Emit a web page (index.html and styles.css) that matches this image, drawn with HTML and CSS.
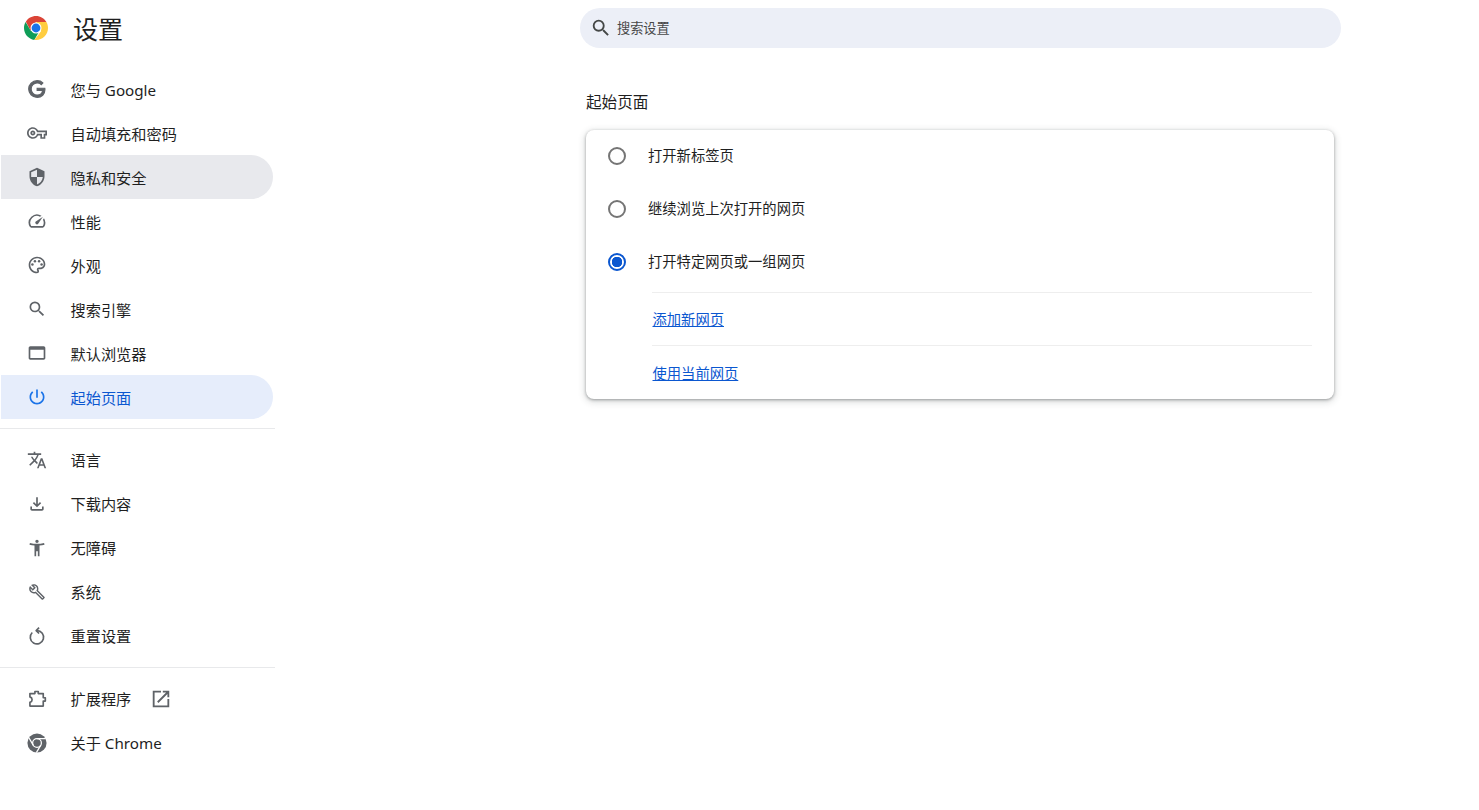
FILE: index.html
```html
<!DOCTYPE html>
<html lang="zh-CN">
<head>
<meta charset="utf-8">
<title>设置</title>
<link rel="stylesheet" href="styles.css">
</head>
<body>
<div class="page">
  <aside class="sidebar">
    <header class="brand">
      <svg class="logo" viewBox="0 0 48 48">
        <circle cx="24" cy="24" r="24" fill="#fff"/>
        <path fill="#db4437" d="M24 0C15.400 0 7.900 4.500 3.700 11.300L13.600 30 24 12h20.800C40.600 4.800 32.900 0 24 0z"/>
        <path fill="#0f9d58" d="M3.200 12.200C1.200 15.700 0 19.700 0 24c0 12.100 9 22.100 20.600 23.800L31 30l-17.300 0z"/>
        <path fill="#ffcd40" d="M44.800 12H24l10.400 18-13.800 17.800c1.100.2 2.200.2 3.400.2 13.300 0 24-10.700 24-24 0-4.400-1.200-8.500-3.200-12z"/>
        <circle cx="24" cy="24" r="11" fill="#fff"/>
        <circle cx="24" cy="24" r="8.800" fill="#1a73e8"/>
      </svg>
      <h1 class="brand-title">设置</h1>
    </header>
    <nav class="nav-group nav-first">
      <a class="nav-item"><svg class="icon icon-bold" viewBox="0 0 24 24"><path d="M21.350 11.100h-9.170v2.730h6.510c-.33 3.810-3.500 5.440-6.500 5.440C8.360 19.270 5 16.250 5 12c0-4.100 3.200-7.270 7.200-7.270 3.090 0 4.900 1.970 4.900 1.970L19 4.720S16.560 2 12.100 2C6.420 2 2.030 6.800 2.030 12c0 5.050 4.130 10 10.220 10 5.350 0 9.250-3.670 9.250-9.090 0-1.150-.15-1.810-.15-1.810z"/></svg><span>您与 Google</span></a>
      <a class="nav-item"><svg class="icon" viewBox="0 0 24 24"><path d="M22 19h-6v-4h-2.680c-1.140 2.420-3.600 4-6.320 4-3.860 0-7-3.140-7-7s3.140-7 7-7c2.720 0 5.170 1.580 6.320 4H24v6h-2v4zm-4-2h2v-4h2v-2H11.940l-.23-.67C11.010 8.340 9.110 7 7 7c-2.760 0-5 2.240-5 5s2.240 5 5 5c2.110 0 4.010-1.340 4.710-3.330l.23-.67H18v4zM7 15c-1.650 0-3-1.350-3-3s1.350-3 3-3 3 1.350 3 3-1.350 3-3 3zm0-4c-.55 0-1 .45-1 1s.45 1 1 1 1-.45 1-1-.45-1-1-1z"/></svg><span>自动填充和密码</span></a>
      <a class="nav-item is-hover"><svg class="icon" viewBox="0 0 24 24"><path d="M12 1L3 5v6c0 5.550 3.840 10.740 9 12 5.160-1.260 9-6.450 9-12V5l-9-4zm0 10.990h7c-.53 4.120-3.280 7.790-7 8.940V12H5V6.300l7-3.110v8.800z"/></svg><span>隐私和安全</span></a>
      <a class="nav-item"><svg class="icon" viewBox="0 0 24 24"><path d="M20.380 8.570l-1.230 1.850a8 8 0 0 1-.22 7.580H5.070A8 8 0 0 1 15.580 6.850l1.850-1.230A10 10 0 0 0 3.350 19a2 2 0 0 0 1.720 1h13.850a2 2 0 0 0 1.740-1 10 10 0 0 0-.27-10.440zm-9.790 6.840a2 2 0 0 0 2.830 0l5.660-8.490-8.490 5.660a2 2 0 0 0 0 2.830z"/></svg><span>性能</span></a>
      <a class="nav-item"><svg class="icon" viewBox="0 0 24 24"><path d="M12 22C6.490 22 2 17.510 2 12S6.490 2 12 2s10 4.040 10 9c0 3.310-2.690 6-6 6h-1.770c-.28 0-.5.22-.5.5 0 .12.05.23.13.33.41.47.64 1.060.64 1.670A2.500 2.500 0 0 1 12 22zm0-18c-4.410 0-8 3.590-8 8s3.590 8 8 8c.28 0 .5-.22.5-.5a.54.54 0 0 0-.14-.35c-.41-.46-.63-1.050-.63-1.650a2.500 2.500 0 0 1 2.500-2.500H16c2.210 0 4-1.790 4-4 0-3.860-3.590-7-8-7z"/><circle cx="6.500" cy="11.500" r="1.500"/><circle cx="9.500" cy="7.500" r="1.500"/><circle cx="14.500" cy="7.500" r="1.500"/><circle cx="17.500" cy="11.500" r="1.500"/></svg><span>外观</span></a>
      <a class="nav-item"><svg class="icon" viewBox="0 0 24 24"><path d="M15.500 14h-.79l-.28-.27A6.470 6.470 0 0 0 16 9.500 6.500 6.500 0 1 0 9.500 16c1.610 0 3.090-.59 4.230-1.570l.27.28v.79l5 4.990L20.490 19l-4.990-5zm-6 0C7.010 14 5 11.990 5 9.500S7.010 5 9.500 5 14 7.010 14 9.500 11.990 14 9.500 14z"/></svg><span>搜索引擎</span></a>
      <a class="nav-item"><svg class="icon" viewBox="0 0 24 24"><path d="M20 4H4c-1.110 0-2 .9-2 2v12c0 1.100.89 2 2 2h16c1.100 0 2-.9 2-2V6c0-1.100-.89-2-2-2zm0 14H4V8h16v10z"/></svg><span>默认浏览器</span></a>
      <a class="nav-item is-active"><svg class="icon" viewBox="0 0 24 24"><path d="M13 3h-2v10h2V3zm4.830 2.170l-1.420 1.420C17.990 7.860 19 9.810 19 12c0 3.870-3.130 7-7 7s-7-3.130-7-7c0-2.190 1.010-4.140 2.580-5.420L6.170 5.170C4.230 6.820 3 9.260 3 12c0 4.970 4.030 9 9 9s9-4.030 9-9c0-2.740-1.230-5.180-3.170-6.830z"/></svg><span>起始页面</span></a>
    </nav>
    <hr class="nav-rule">
    <nav class="nav-group nav-raised">
      <a class="nav-item"><svg class="icon" viewBox="0 0 24 24"><path d="M12.870 15.070l-2.540-2.510.03-.03c1.740-1.940 2.980-4.170 3.710-6.530H17V4h-7V2H8v2H1v1.990h11.170C11.500 7.920 10.440 9.750 9 11.350 8.070 10.320 7.300 9.190 6.690 8h-2c.73 1.630 1.730 3.170 2.980 4.560l-5.090 5.020L4 19l5-5 3.110 3.110.76-2.040zM18.500 10h-2L12 22h2l1.120-3h4.750L21 22h2l-4.500-12zm-2.620 7l1.620-4.330L19.120 17h-3.240z"/></svg><span>语言</span></a>
      <a class="nav-item"><svg class="icon" viewBox="0 0 24 24"><path d="M18 15v3H6v-3H4v3c0 1.100.9 2 2 2h12c1.100 0 2-.9 2-2v-3h-2zm-1-4l-1.410-1.410L13 12.170V4h-2v8.170L8.410 9.590 7 11l5 5 5-5z"/></svg><span>下载内容</span></a>
      <a class="nav-item"><svg class="icon" viewBox="0 0 24 24"><path d="M20.500 6c-2.610.7-5.670 1-8.500 1s-5.890-.3-8.500-1L3 8c1.860.5 4 .83 6 1v13h2v-6h2v6h2V9c2-.17 4.140-.5 6-1l-.5-2zM12 6c1.100 0 2-.9 2-2s-.9-2-2-2-2 .9-2 2 .9 2 2 2z"/></svg><span>无障碍</span></a>
      <a class="nav-item"><svg class="icon" viewBox="-2 -2 28 28"><path d="M22.610 18.990l-9.080-9.080c.93-2.340.45-5.100-1.440-7C9.790.61 6.210.4 3.660 2.260L7.500 6.110 6.080 7.520 2.250 3.690C.39 6.230.6 9.820 2.900 12.110c1.860 1.860 4.570 2.350 6.890 1.480l9.110 9.110c.39.39 1.020.39 1.410 0l2.300-2.300c.4-.38.4-1.010 0-1.410zm-3 1.600l-9.460-9.460c-.61.45-1.290.72-2 .82-1.360.2-2.790-.21-3.830-1.250C3.370 9.760 2.930 8.500 3 7.260l3.090 3.090 4.240-4.240-3.090-3.090c1.240-.07 2.490.37 3.440 1.310 1.080 1.080 1.490 2.570 1.240 3.960-.12.71-.42 1.370-.88 1.960l9.450 9.450-.88.89z"/></svg><span>系统</span></a>
      <a class="nav-item"><svg class="icon icon-line" viewBox="0 0 24 24"><path d="M6.300 7.800A8 8 0 1 0 12 5.500"/><path d="M14.500 2L11 5.500 14.500 9"/></svg><span>重置设置</span></a>
    </nav>
    <hr class="nav-rule">
    <nav class="nav-group nav-last nav-raised">
      <a class="nav-item"><svg class="icon icon-line" viewBox="0 0 24 24"><path d="M3.500 5.500H9.500V3H13.500V5.500H19.500V10.500H22V14.500H19.500V20.500H3.500V16C7 15 7 10.500 3.500 9.500Z"/></svg><span>扩展程序</span><svg class="icon external" viewBox="0 0 24 24"><path d="M19 19H5V5h7V3H3v18h18v-9h-2v7zM14 3v2h3.590l-9.830 9.830 1.410 1.410L19 6.410V10h2V3h-7z"/></svg></a>
      <a class="nav-item"><svg class="icon icon-chrome" viewBox="0 0 48 48"><circle cx="24" cy="24" r="23"/><g class="chrome-cuts"><circle cx="24" cy="24" r="10.500"/><path d="M24 13.500H45"/><path d="M14.900 29.250L4.500 11.500"/><path d="M33.100 29.250L22.500 47"/></g></svg><span>关于 Chrome</span></a>
    </nav>
  </aside>
  <main class="main">
    <div class="search">
      <svg class="search-icon" viewBox="0 0 24 24"><path d="M15.500 14h-.79l-.28-.27A6.470 6.470 0 0 0 16 9.500 6.500 6.500 0 1 0 9.500 16c1.610 0 3.090-.59 4.230-1.570l.27.28v.79l5 4.990L20.490 19l-4.990-5zm-6 0C7.010 14 5 11.990 5 9.500S7.010 5 9.500 5 14 7.010 14 9.500 11.990 14 9.500 14z"/></svg>
      <span class="search-text">搜索设置</span>
    </div>
    <section class="section">
      <h2 class="section-title">起始页面</h2>
      <div class="card">
        <div class="radio-row row-first"><span class="radio"></span><span class="radio-label">打开新标签页</span></div>
        <div class="radio-row"><span class="radio"></span><span class="radio-label">继续浏览上次打开的网页</span></div>
        <div class="radio-row"><span class="radio is-checked"></span><span class="radio-label">打开特定网页或一组网页</span></div>
        <div class="link-row link-first"><a class="link link-raised">添加新网页</a></div>
        <div class="link-row"><a class="link">使用当前网页</a></div>
      </div>
    </section>
  </main>
</div>
</body>
</html>
```
FILE: styles.css
```css
* { box-sizing: border-box; }
html, body { margin: 0; height: 100%; background: #fff; overflow: hidden; }
body {
  font-family: "Noto Sans", "Noto Sans CJK SC", sans-serif;
  color: #1f1f1f;
}
.page { display: flex; height: 810px; }
.sidebar { width: 275px; flex: none; }
.brand { display: flex; align-items: center; height: 56px; padding-left: 24px; }
.logo { width: 24px; height: 24px; display: block; }
.brand-title { margin: 2px 0 0 25px; font-size: 25px; font-weight: 400; line-height: 28px; }
.nav-first { margin-top: 11px; }
.nav-last { margin-top: 1px; }
.nav-group { display: flex; flex-direction: column; }
.nav-raised .nav-item span { margin-top: -2px; }
.nav-item {
  display: flex; align-items: center;
  width: 272px; height: 44px; margin-left: 1px; padding-left: 26px;
  font-size: 15.200px; color: #1f1f1f;
  border-radius: 0 22px 22px 0;
}
.icon { width: 20px; height: 20px; flex: none; margin-right: 23.500px; fill: #5f6368; display: block; }
.icon-bold { stroke: #5f6368; stroke-width: 1.400; }
.icon-line { fill: none; stroke: #5f6368; stroke-width: 2; stroke-linejoin: round; }
.icon-chrome { fill: #5f6368; }
.chrome-cuts { fill: none; stroke: #fff; stroke-width: 3; }
.icon.external { margin: 0 0 0 19px; width: 22px; height: 22px; }
.is-hover { background: #e8e9ed; }
.is-active { background: #e6edfb; color: #0b57d0; }
.is-active .icon { fill: #1a73e8; }
.nav-rule { border: 0; border-top: 1px solid #e8e9eb; margin: 9px 0; }
.main { flex: 1; padding-left: 305px; }
.search {
  display: flex; align-items: center;
  width: 761px; height: 40px; margin-top: 8px; padding-left: 10px;
  background: #eceff7; border-radius: 20px;
}
.search-icon { width: 22px; height: 22px; fill: #444746; flex: none; margin: -1px 5px 0 0; }
.search-text { font-size: 13.200px; color: #474747; margin-top: -2px; }
.section { width: 748px; margin-left: 6px; }
.section-title { margin: 42px 0 0; font-size: 15.600px; font-weight: 400; line-height: 24px; height: 40px; }
.card {
  display: flow-root;
  background: #fff; border-radius: 8px; height: 269px;
  box-shadow: 0 1px 3px rgba(60,64,67,.45), 0 2px 6px 2px rgba(60,64,67,.15);
  font-size: 14.300px;
}
.radio-row { display: flex; align-items: center; height: 53px; padding-left: 22px; }
.row-first { margin-top: -1px; }
.radio { width: 18px; height: 18px; margin-right: 22px; border: 2px solid #757575; border-radius: 50%; flex: none; }
.radio-label { margin-top: -2px; }
.is-checked { border-color: #0b57d0; background: radial-gradient(circle, #0b57d0 0 5px, transparent 5.500px); }
.link-row { height: 53px; margin: 0 22px 0 66px; border-top: 1px solid #eeeeee; display: flex; align-items: center; padding-left: .5px; }
.link-first { margin-top: 4px; }
.link-raised { margin-top: -2px; }
.link { color: #0b57d0; text-decoration: underline; }
```
